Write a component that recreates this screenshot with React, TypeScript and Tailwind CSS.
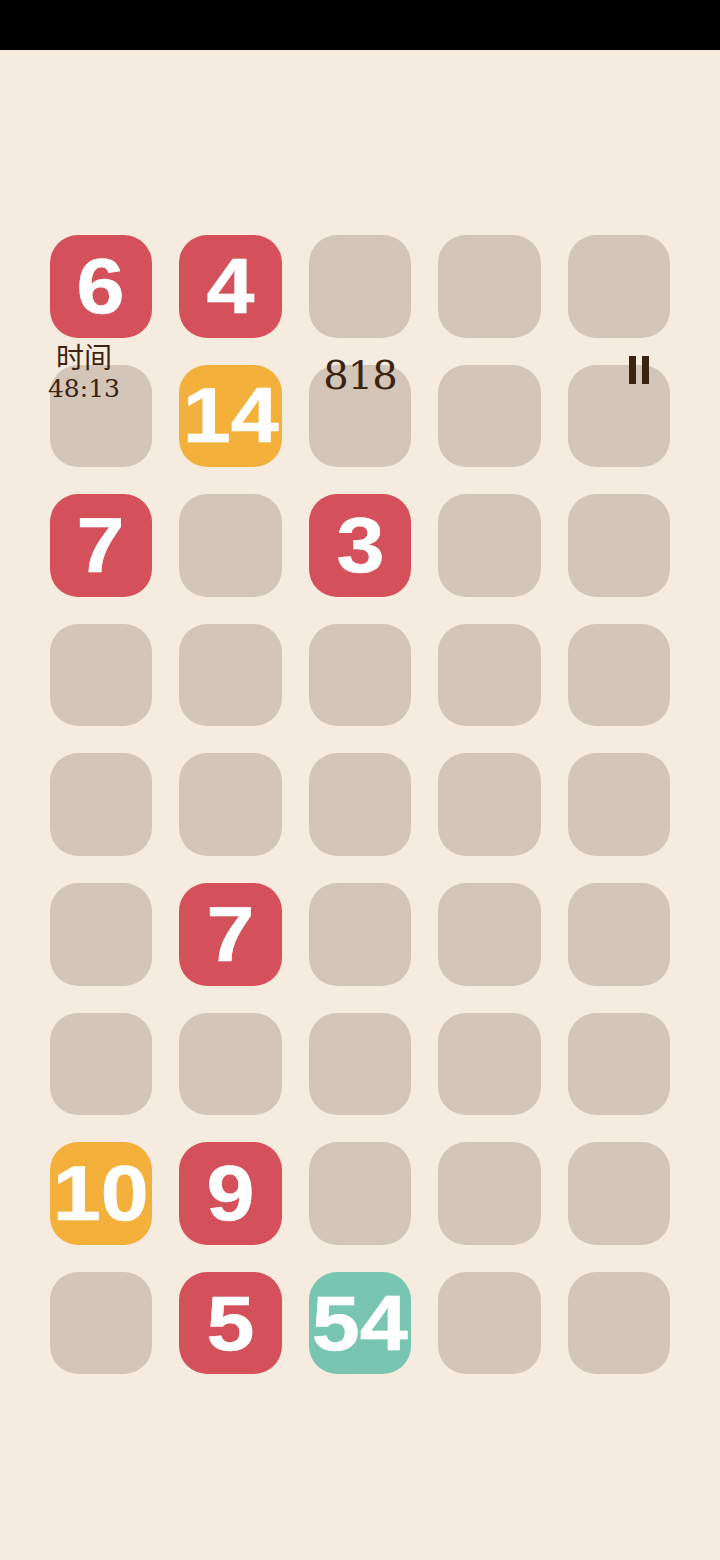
import React from "react";

type Tile = { v?: number; c?: "r" | "o" | "t" };

const R = (v: number): Tile => ({ v, c: "r" });
const O = (v: number): Tile => ({ v, c: "o" });
const T = (v: number): Tile => ({ v, c: "t" });
const E: Tile = {};

const board: Tile[][] = [
  [R(6), R(4), E, E, E],
  [E, O(14), E, E, E],
  [R(7), E, R(3), E, E],
  [E, E, E, E, E],
  [E, E, E, E, E],
  [E, R(7), E, E, E],
  [E, E, E, E, E],
  [O(10), R(9), E, E, E],
  [E, R(5), T(54), E, E],
];

function TileView({ t }: { t: Tile }) {
  const bg =
    t.c === "r"
      ? "bg-[#d4515b]"
      : t.c === "o"
      ? "bg-[#f3b03a]"
      : t.c === "t"
      ? "bg-[#78c5b1]"
      : "bg-[#d3c5b8]";
  return (
    <div className={`${bg} aspect-square rounded-[28px] flex items-center justify-center`}>
      {t.v !== undefined && (
        <span className="text-white font-bold text-[77px] leading-none whitespace-nowrap scale-x-[1.12] [-webkit-text-stroke:0.6px_white] font-['Liberation_Sans',Arial,sans-serif]">
          {t.v}
        </span>
      )}
    </div>
  );
}

export default function App() {
  return (
    <div className="w-[720px] min-h-[1560px] bg-[#f5ecdf] relative">
      <div className="h-[50px] bg-black" />
      <div className="pt-[185px]">
        <div className="w-[621px] mx-auto grid grid-cols-5 gap-[27px]">
          {board.flat().map((t, i) => (
            <TileView key={i} t={t} />
          ))}
        </div>
      </div>

      {/* HUD overlay */}
      <div className="absolute left-[24px] right-[21px] top-[338px] flex items-start text-[#3b2311]">
        <div className="w-[120px] flex flex-col items-center">
          <span className="text-[28px] leading-[37px] font-['Noto_Sans_CJK_SC',sans-serif]">
            时间
          </span>
          <span className="text-[25px] leading-[28px] font-['DejaVu_Serif',serif]">
            48:13
          </span>
        </div>
        <div className="flex-1 flex justify-center pt-[13px] pr-[3px]">
          <span className="text-[40px] leading-[48px] tracking-[-1px] font-['DejaVu_Serif',serif]">
            818
          </span>
        </div>
        <div className="w-[120px] flex justify-center pt-[18px]">
          <div className="flex gap-[6px]">
            <div className="w-[7px] h-[28px] bg-[#3b2311]" />
            <div className="w-[7px] h-[28px] bg-[#3b2311]" />
          </div>
        </div>
      </div>
    </div>
  );
}
